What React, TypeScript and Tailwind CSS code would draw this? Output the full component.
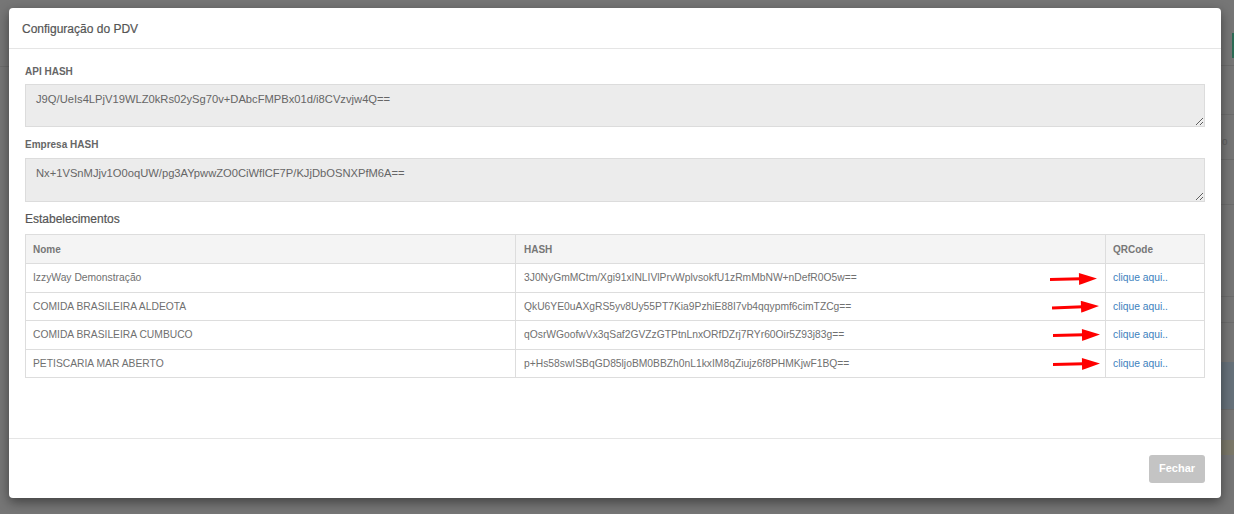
import React from 'react';

const rows = [
  { nome: 'IzzyWay Demonstração', hash: '3J0NyGmMCtm/Xgi91xINLIVlPrvWplvsokfU1zRmMbNW+nDefR0O5w==', arrow: 'mr-[8px] mt-[2px] rotate-[-1deg]' },
  { nome: 'COMIDA BRASILEIRA ALDEOTA', hash: 'QkU6YE0uAXgRS5yv8Uy55PT7Kia9PzhiE88I7vb4qqypmf6cimTZCg==', arrow: 'mr-[6px] mt-[1px] rotate-[-2deg]' },
  { nome: 'COMIDA BRASILEIRA CUMBUCO', hash: 'qOsrWGoofwVx3qSaf2GVZzGTPtnLnxORfDZrj7RYr60Oir5Z93j83g==', arrow: 'mr-[5px] mt-[1px] rotate-[-1deg]' },
  { nome: 'PETISCARIA MAR ABERTO', hash: 'p+Hs58swISBqGD85ljoBM0BBZh0nL1kxIM8qZiujz6f8PHMKjwF1BQ==', arrow: 'mr-[5px] mt-[1px] rotate-[-1deg]' },
];

const RedArrow = ({ className }: { className: string }) => (
  <svg width="47" height="12" viewBox="0 0 47 12" className={className}>
    <path d="M0 4.6 L31 4.4 L31 7.4 L0 7.6 Z" fill="#f00" />
    <path d="M29 0 L47 5.9 L29 12 Z" fill="#f00" />
  </svg>
);

export default function App() {
  return (
    <div className="relative w-[1234px] h-[514px] overflow-hidden bg-[#767676]" style={{ fontFamily: '"Liberation Sans", Arial, sans-serif' }}>
      {/* page behind the backdrop */}
      <div className="absolute inset-0 flex justify-end">
        <div className="w-[13px] h-full flex flex-col">
          <div className="h-[33px]" />
          <div className="h-[25px] flex justify-end"><div className="w-[2px] bg-[#2c6b55]" /></div>
          <div className="h-[8px] border-b border-[#6c6c6c]" />
          <div className="h-[49px] border-b border-[#6c6c6c]" />
          <div className="h-[45px] border-b border-[#6c6c6c] text-[10px] text-[#5d5d5d] pl-[1px] pt-[22px] leading-none">o</div>
          <div className="h-[45px] border-b border-[#6c6c6c]" />
          <div className="h-[92px] border-b border-[#6c6c6c]" />
          <div className="h-[26px] border-b border-[#6c6c6c]" />
          <div className="h-[39px]" />
          <div className="h-[48px] bg-[#66717a] border-b border-[#6c6c6c]" />
          <div className="h-[30px]" />
          <div className="h-[15px] bg-[#7b7869]" />
        </div>
      </div>
      <div className="absolute left-0 top-[66px] w-[9px] border-b border-[#6c6c6c]" />

      {/* modal */}
      <div className="absolute left-[9px] top-[8px] w-[1212px] h-[490px] bg-white rounded-[4px] shadow-[0_4px_12px_rgba(0,0,0,0.45)] flex flex-col">
        <div className="h-[41px] border-b border-[#e5e5e5] px-[13px] flex items-center">
          <h4 className="text-[12px] text-[#555] pt-[1px] [-webkit-text-stroke:0.2px_#555]">Configuração do PDV</h4>
        </div>

        <div className="flex-1 px-[16px] pt-[17px]">
          <label className="block text-[10px] font-bold text-[#666] leading-[12px] mb-[6px]">API HASH</label>
          <textarea
            readOnly
            defaultValue="J9Q/UeIs4LPjV19WLZ0kRs02ySg70v+DAbcFMPBx01d/i8CVzvjw4Q=="
            className="block w-full h-[43px] bg-[#ececec] border border-[#dcdcdc] text-[11.2px] text-[#666] px-[10px] pt-[7px] leading-[14px] outline-none"
          />
          <label className="block text-[10px] font-bold text-[#666] leading-[12px] mt-[12px] mb-[7px]">Empresa HASH</label>
          <textarea
            readOnly
            defaultValue="Nx+1VSnMJjv1O0oqUW/pg3AYpwwZO0CiWflCF7P/KJjDbOSNXPfM6A=="
            className="block w-full h-[44px] bg-[#ececec] border border-[#dcdcdc] text-[11.2px] text-[#666] px-[10px] pt-[7px] leading-[14px] outline-none"
          />
          <div className="text-[12px] text-[#555] leading-[16px] mt-[9px] mb-[7px] [-webkit-text-stroke:0.2px_#555]">Estabelecimentos</div>

          <table className="w-full border-collapse text-left">
            <thead>
              <tr className="bg-[#f4f4f4] h-[29px]">
                <th className="w-[490px] border border-[#dddddd] px-[7px] text-[10px] font-bold text-[#777]">Nome</th>
                <th className="w-[590px] border border-[#dddddd] px-[8px] text-[10px] font-bold text-[#777]">HASH</th>
                <th className="border border-[#dddddd] px-[7px] text-[10px] font-bold text-[#777]">QRCode</th>
              </tr>
            </thead>
            <tbody>
              {rows.map((r) => (
                <tr key={r.nome} className="h-[28.6px]">
                  <td className="border border-[#dddddd] px-[7px] text-[10.3px] text-[#707070]">{r.nome}</td>
                  <td className="border border-[#dddddd] pl-[8px] pr-0 text-[10.3px] text-[#707070]">
                    <div className="flex items-center justify-between">
                      <span>{r.hash}</span>
                      <RedArrow className={r.arrow} />
                    </div>
                  </td>
                  <td className="border border-[#dddddd] px-[7px] text-[10.3px]">
                    <a className="text-[#3d7fbd] cursor-pointer">clique aqui..</a>
                  </td>
                </tr>
              ))}
            </tbody>
          </table>
        </div>

        <div className="h-[60px] border-t border-[#e5e5e5] px-[16px] flex items-center justify-end">
          <button className="w-[56px] h-[28px] bg-[#c4c4c4] rounded-[3px] text-white text-[11px] font-bold">Fechar</button>
        </div>
      </div>
    </div>
  );
}
